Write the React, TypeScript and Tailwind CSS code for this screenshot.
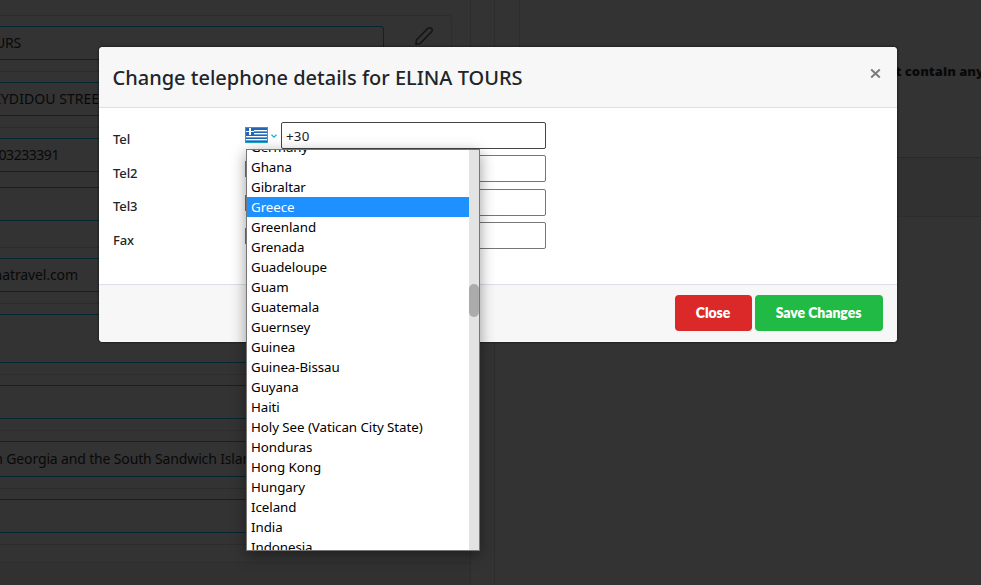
import React from "react";

const countries = [
  "Germany", "Ghana", "Gibraltar", "Greece", "Greenland", "Grenada", "Guadeloupe",
  "Guam", "Guatemala", "Guernsey", "Guinea", "Guinea-Bissau", "Guyana", "Haiti",
  "Holy See (Vatican City State)", "Honduras", "Hong Kong", "Hungary", "Iceland",
  "India", "Indonesia",
];

function Field({ size, children }: { size: string; children?: React.ReactNode }) {
  return (
    <div className={`${size} flex w-[384px] shrink-0 items-center overflow-hidden rounded-r border border-l-0 border-[#022733] pb-[2px]`}>
      {children}
    </div>
  );
}

function Rule({ gap }: { gap: string }) {
  return <div className={`${gap} h-px w-[451px] shrink-0 bg-[#2d2d2d]`} />;
}

function Pencil() {
  return (
    <svg className="mt-[10px] ml-[30px] h-5 w-5" viewBox="0 0 20 20" fill="none" stroke="#151515" strokeWidth="1.5" strokeLinejoin="round">
      <path d="M1.8 18.3 L2.6 13.7 L13.6 2.6 Q15.7 0.8 17.5 2.5 Q19 4.2 17.5 5.9 L6.2 17.4 Z" />
    </svg>
  );
}

function Backdrop() {
  return (
    <div className="flex h-full w-full text-[14px] text-[#090909]">
      <div className="flex w-[471px] shrink-0 flex-col border-r border-[#2d2d2d]">
        <div className="mt-[15px] flex h-[530px] w-[452px] shrink-0 flex-col rounded-tr border-t border-r border-b border-[#2d2d2d]">
          <div className="flex h-[55px] shrink-0">
            <div className="mt-[10px]">
              <Field size="h-[34px]">
                <span className="flex w-[21px] justify-end tracking-[-0.2px]">TOURS</span>
              </Field>
            </div>
            <Pencil />
          </div>
          <Rule gap="mb-[10px]" />
          <Field size="h-[34px]">
            <span className="flex w-[107px] justify-end whitespace-nowrap tracking-[0.05px]">THOUKYDIDOU STREET</span>
          </Field>
          <Rule gap="mt-[11px] mb-[10px]" />
          <Field size="h-[34px]">
            <span className="flex w-[59px] justify-end tracking-[-0.45px]">2103233391</span>
          </Field>
          <div className="h-[15px] shrink-0" />
          <Field size="h-[34px]" />
          <Rule gap="mt-[26px] mb-[10px]" />
          <Field size="h-[34px]">
            <span className="flex w-[78px] justify-end tracking-[-0.1px]">elinatravel.com</span>
          </Field>
          <Rule gap="mt-[11px] mb-[10px]" />
          <Field size="h-[49px]" />
          <Rule gap="mt-[11px] mb-[10px]" />
          <Field size="h-[34px]" />
          <Rule gap="mt-[11px] mb-[10px]" />
          <Field size="h-[36px]">
            <span className="flex w-[266px] justify-end whitespace-nowrap tracking-[-0.15px]">South Georgia and the South Sandwich Islands</span>
          </Field>
          <Rule gap="mt-[11px] mb-[10px]" />
          <Field size="h-[34px]" />
        </div>
        <div className="mt-[17px] h-[23px] border-t border-[#2d2d2d] bg-[#313131]" />
      </div>
      <div className="w-6 shrink-0 border-r border-[#2d2d2d]" />
      <div className="ml-6 flex h-[217px] flex-1 flex-col border-b border-l border-[#2d2d2d]">
        <div className="flex h-[157px] justify-end pt-[62px]">
          <span className="mr-[-3px] whitespace-nowrap text-[13px] font-black">The name must not contain any</span>
        </div>
        <div className="flex-1 border-t border-[#292929] bg-[#313131]" />
      </div>
    </div>
  );
}

function GreekFlag() {
  return (
    <svg className="h-4 w-[23px]" viewBox="0 0 23 16" shapeRendering="crispEdges">
      <rect width="23" height="16" fill="#13a9cf" />
      <rect x="1" y="1" width="21" height="14" fill="#2265b5" />
      <path d="M9 3h13v1H9zM9 6h13v1H9zM1 9h21v1H1zM1 12h21v1H1zM4 1h2v7H4zM1 4h8v1H1z" fill="#fff" />
      <path d="M9 4h13v1H9zM1 10h21v1H1zM1 13h21v1H1zM9 7h13v1H9z" fill="#6ea0d7" />
    </svg>
  );
}

function PhoneRow({ label, value, active, gap, inset }: { label: string; value?: string; active?: boolean; gap: string; inset: string }) {
  return (
    <div className={`${gap} flex h-[27px] shrink-0`}>
      <div className={`${inset} w-[132px] text-[13px] leading-5 font-medium tracking-[-0.1px] text-[#212529]`}>{label}</div>
      <div className="flex w-9 pt-[5px]">
        {active ? (
          <>
            <GreekFlag />
            <svg className="mt-[7px] ml-[3px] h-[5px] w-[6px]" viewBox="0 0 6 5" fill="none" stroke="#16b1d3" strokeWidth="1.3">
              <path d="M0.5 0.8 L3 3.2 L5.5 0.8" />
            </svg>
          </>
        ) : (
          <div className="mt-px h-4 w-[23px] bg-[#767676]" />
        )}
      </div>
      <div className={`flex w-[265px] items-center rounded-[2px] border pt-[2px] pl-1 text-[13.33px] tracking-[0.2px] text-[#222] ${active ? "border-[#444]" : "border-[#767676]"}`}>
        {value}
      </div>
    </div>
  );
}

function Modal() {
  return (
    <div className="absolute top-[47px] left-[99px] flex h-[295px] w-[798px] flex-col overflow-hidden rounded-[4px] bg-white shadow-[0_0_2px_1px_rgba(0,0,0,0.35)]">
      <div className="flex h-[61px] shrink-0 items-center justify-between border-b border-[#dedfe0] bg-[#f7f7f7] pr-[15px] pl-[13.5px]">
        <h1 className="pt-px text-[20px] font-medium whitespace-nowrap text-[#212529]">Change telephone details for ELINA TOURS</h1>
        <svg className="mt-[-7px] h-[13px] w-[13px]" viewBox="0 0 13 13" stroke="#7b7b7b" strokeWidth="2">
          <path d="M2.2 2.5 L10.8 10.5 M10.8 2.5 L2.2 10.5" />
        </svg>
      </div>
      <div className="flex flex-1 flex-col pl-[14px]">
        <PhoneRow label="Tel" value="+30" active gap="mt-[14px]" inset="pt-[7px]" />
        <PhoneRow label="Tel2" gap="mt-[6px]" inset="pt-[8px]" />
        <PhoneRow label="Tel3" gap="mt-[7px]" inset="pt-[7px]" />
        <PhoneRow label="Fax" gap="mt-[6px]" inset="pt-[8px]" />
      </div>
      <div className="flex h-[58px] shrink-0 justify-end gap-[3px] border-t border-[#dcdfe6] bg-[#f7f7f7] pt-[10px] pr-[14px] [font-family:Lato,sans-serif] text-[14px] font-extrabold tracking-[-0.05px] text-white">
        <button className="h-9 w-[77px] rounded-[4px] bg-[#db2828] pr-px pb-[2px]">Close</button>
        <button className="h-9 w-[128px] rounded-[4px] bg-[#21ba45] pr-px pb-[2px]">Save Changes</button>
      </div>
    </div>
  );
}

function CountryMenu() {
  return (
    <div className="absolute top-[149px] left-[246px] flex h-[402px] w-[234px] overflow-hidden border border-[#767676] bg-white shadow-[0_4px_14px_rgba(0,0,0,0.4)]">
      <div className="mt-[-13px] flex-1">
        {countries.map((c) => (
          <div key={c} className={`h-5 pl-1 text-[13.33px] leading-5 tracking-[-0.06px] whitespace-nowrap ${c === "Greece" ? "bg-[#1e90ff] text-white" : "text-black"}`}>
            {c}
          </div>
        ))}
      </div>
      <div className="w-[10px] bg-[#e3e3e3] pt-[134px]">
        <div className="h-[33px] rounded-full bg-[#ababab]" />
      </div>
    </div>
  );
}

export default function App() {
  return (
    <div className="relative h-[585px] w-[981px] overflow-hidden bg-[#333] [font-family:'Noto_Sans','Open_Sans',sans-serif]">
      <Backdrop />
      <Modal />
      <CountryMenu />
    </div>
  );
}
